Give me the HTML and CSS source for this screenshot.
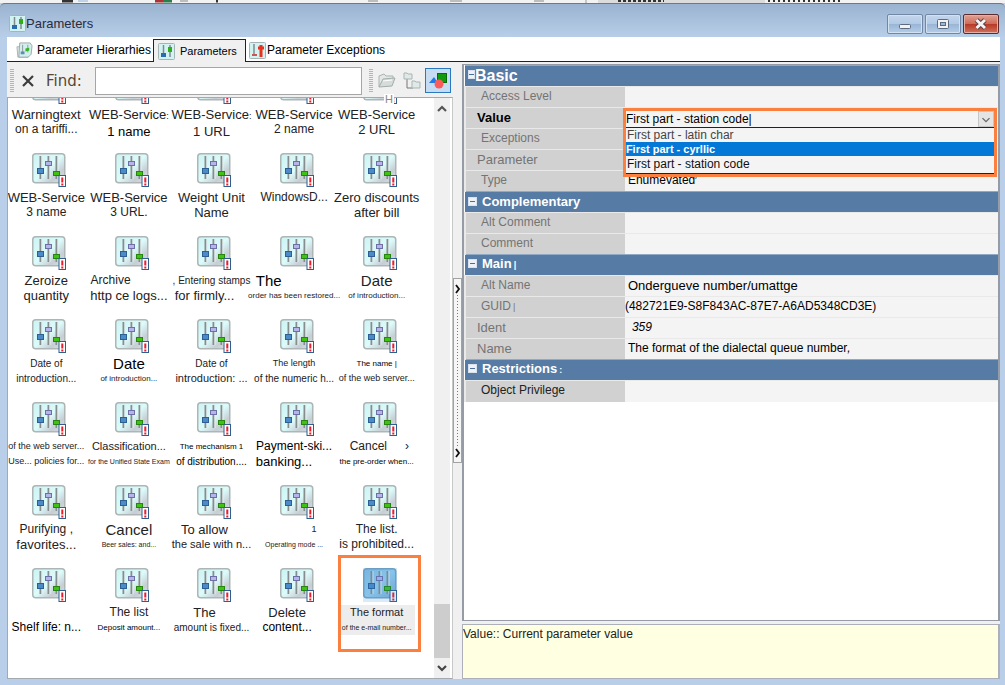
FILE: index.html
```html
<!DOCTYPE html>
<html lang="en">
<head>
<meta charset="utf-8">
<title>Parameters</title>
<link rel="stylesheet" href="styles.css">
</head>
<body>
<svg class="defs" aria-hidden="true">
  <defs>
    <linearGradient id="plate" x1="0" y1="0" x2="1" y2="1">
      <stop offset="0" stop-color="#cdf3f3"/><stop offset=".5" stop-color="#dcfbfb"/><stop offset=".75" stop-color="#c6ced4"/><stop offset="1" stop-color="#d8e2e4"/>
    </linearGradient>
    <linearGradient id="plate-on" x1="0" y1="0" x2="1" y2="1">
      <stop offset="0" stop-color="#86bfe4"/><stop offset=".5" stop-color="#9bd0ee"/><stop offset="1" stop-color="#7fadd2"/>
    </linearGradient>
    <g id="sliders">
      <path d="M8.500 3v23M16.500 3v23M24.500 3v23" stroke="#858d8d" stroke-width="2"/>
      <path d="M10 3v23M18 3v23M26 3v23" stroke="#e4eded" stroke-width="1"/>
      <rect x="5.500" y="15.500" width="6" height="5" fill="#4b8cc8" stroke="#2d5f94"/>
      <rect x="13.500" y="8.500" width="6" height="4" fill="#b5b5ec" stroke="#6f6fa8"/>
      <rect x="21.500" y="18.500" width="6" height="4" fill="#3fc214" stroke="#25850c"/>
      <rect x="27" y="22.500" width="6.500" height="11" fill="#fff" stroke="#2f5f8f"/>
      <path d="M30.300 24.500v5M30.300 30.500v2" stroke="#ec1c2c" stroke-width="2"/>
    </g>
    <symbol id="param" viewBox="0 0 34 34">
      <rect x=".75" y=".75" width="32" height="29" rx="3" fill="url(#plate)" stroke="#adb5b5" stroke-width="1.500"/>
      <use href="#sliders"/>
    </symbol>
    <symbol id="param-on" viewBox="0 0 34 34">
      <rect x=".75" y=".75" width="32" height="29" rx="3" fill="url(#plate-on)" stroke="#7ba2bd" stroke-width="1.500"/>
      <use href="#sliders"/>
      <rect width="34" height="34" fill="#2a8ad8" opacity=".18"/>
    </symbol>
    <symbol id="small" viewBox="0 0 17 17">
      <rect x=".5" y=".5" width="16" height="16" rx="1" fill="#d3f3f3" stroke="#a5b4b4"/>
      <path d="M5.500 2v12M12 2v12" stroke="#7f8c8c" stroke-width="1.500"/>
      <rect x="3" y="10" width="5" height="4" fill="#2b6cb0"/>
      <rect x="10" y="4" width="4" height="5" fill="#2fae1b"/>
    </symbol>
    <symbol id="small-red" viewBox="0 0 17 17">
      <rect x=".5" y=".5" width="16" height="16" rx="1" fill="#d3f3f3" stroke="#a5b4b4"/>
      <path d="M5 2v10" stroke="#7f8c8c" stroke-width="1.500"/>
      <path d="M3 13h5" stroke="#c55" stroke-width="2"/>
      <path d="M12 3v12M9 6h6" stroke="#e8321e" stroke-width="3"/>
    </symbol>
    <symbol id="small-folder" viewBox="0 0 18 18">
      <path d="M1 5h12v11H2z" fill="#dfe6e6" stroke="#a9b3b3"/>
      <path d="M4 1h11l2 3-1 9-3 3H3z" fill="#d3eeee" stroke="#9ba8a8"/>
      <path d="M7 3v8M12.500 3v8" stroke="#8b9797"/>
      <path d="M5 10h4v3H5z" fill="#5c8fae"/>
      <path d="M10 7l4-1v3l-4 1z" fill="#35b322"/>
    </symbol>
  </defs>
</svg>

<svg class="backdrop" viewBox="0 0 1005 3" preserveAspectRatio="none" aria-hidden="true">
  <rect width="1005" height="3" fill="#f2f2f2"/>
  <path d="M62 1h11M216 1h2" stroke="#333" stroke-width="3"/>
  <path d="M78 1h10" stroke="#bcd3ea" stroke-width="2"/>
  <path d="M155 1h8" stroke="#a33" stroke-width="3"/><path d="M163 1h9" stroke="#2d7c4c" stroke-width="3"/>
  <path d="M180 1h8M368 1h10M450 1h12M534 1h10" stroke="#888" stroke-width="1"/>
  <path d="M586 0v3" stroke="#999"/><path d="M598 1.500h167" stroke="#dcdcdc" stroke-width="3"/>
  <path d="M618 1h46" stroke="#333" stroke-width="2" stroke-dasharray="3 2"/>
  <path d="M768 1h74" stroke="#333" stroke-width="2" stroke-dasharray="2 3"/>
</svg>

<div class="window">
  <header class="titlebar">
    <svg class="icon17"><use href="#small"/></svg>
    <h1 class="title">Parameters</h1>
    <div class="controls">
      <button class="ctl" aria-label="Minimize"><svg viewBox="0 0 34 18"><rect x="11.500" y="9.500" width="11" height="4" rx="1" fill="#f2f2f2" stroke="#5c6b80"/></svg></button>
      <button class="ctl" aria-label="Restore"><svg viewBox="0 0 34 18"><rect x="11.500" y="4.500" width="11" height="9" rx="1" fill="#f2f2f2" stroke="#5c6b80"/><rect x="14.500" y="7.500" width="5" height="3" fill="#9db8d8" stroke="#5c6b80"/></svg></button>
      <button class="ctl close" aria-label="Close"><svg viewBox="0 0 34 18"><path d="M12.500 5l8.500 8M21 5l-8.500 8" stroke="#5b4048" stroke-width="5"/><path d="M12.500 5l8.500 8M21 5l-8.500 8" stroke="#f4f4f4" stroke-width="3"/></svg></button>
    </div>
  </header>

  <nav class="tabs" role="tablist">
    <button class="tab first" role="tab"><svg class="icon17"><use href="#small-folder"/></svg>Parameter Hierarhies</button>
    <button class="tab active" role="tab" aria-selected="true"><svg class="icon17"><use href="#small"/></svg>Parameters</button>
    <button class="tab last" role="tab"><svg class="icon17"><use href="#small-red"/></svg>Parameter Exceptions</button>
  </nav>

  <main class="main">
    <section class="left">
      <div class="toolbar">
        <span class="grip"></span>
        <button class="tool clear" aria-label="Clear"><svg viewBox="0 0 12 12"><path d="M1 1l10 10M11 1L1 11" stroke="#3c3c3c" stroke-width="2.200"/></svg></button>
        <label class="find" for="find">Find:</label>
        <input class="search" id="find" type="text">
        <span class="grip"></span>
        <button class="tool folder" aria-label="Open folder"><svg viewBox="0 0 18 16"><path d="M1 14V3l5-2 2 2h7v3" fill="#e3e8e6" stroke="#aab3b0"/><path d="M1 14l4-8 12-1-3 8z" fill="#d5dcda" stroke="#a3adaa"/><path d="M5 8l9-1" stroke="#fff"/></svg></button>
        <button class="tool tree" aria-label="Tree"><svg viewBox="0 0 18 18"><path d="M4 6v10h6" fill="none" stroke="#777"/><path d="M1 1h3l1 1h4v5H1z" fill="#dfe9e8" stroke="#a9b5b3"/><path d="M9 9h3l1 1h4v6H9z" fill="#dfe9e8" stroke="#a9b5b3"/></svg></button>
        <button class="tool shapes" aria-label="Shapes" aria-pressed="true"><svg viewBox="0 0 18 16"><path d="M0 10l5-6 4 6z" fill="#1b7bea"/><rect x="8.500" y=".5" width="9" height="9" fill="#0f9a0f" stroke="#0a6a0a"/><circle cx="10" cy="11" r="4.500" fill="#fb5a5a"/></svg></button>
      </div>

      <div class="list">
        <span class="hotkey">H</span>
        <div class="viewport">
          <ul class="tiles">
            <li class="tile"><svg><use href="#param"/></svg><span class="s13">Warningtext</span><span class="s12">on a tariffi...</span></li>
            <li class="tile"><svg><use href="#param"/></svg><span class="s13">WEB-Service<small>:</small></span><span class="s13 dark">1 name</span></li>
            <li class="tile"><svg><use href="#param"/></svg><span class="s13">WEB-Service<small>:</small></span><span class="s13">1 URL</span></li>
            <li class="tile"><svg><use href="#param"/></svg><span class="s13">WEB-Service</span><span class="s12">2 name</span></li>
            <li class="tile"><svg><use href="#param"/></svg><span class="s13">WEB-Service</span><span class="s13">2 URL</span></li>

            <li class="tile"><svg><use href="#param"/></svg><span class="s13">WEB-Service</span><span class="s12">3 name</span></li>
            <li class="tile"><svg><use href="#param"/></svg><span class="s13">WEB-Service</span><span class="s12">3 URL.</span></li>
            <li class="tile"><svg><use href="#param"/></svg><span class="s13">Weight Unit</span><span class="s13">Name</span></li>
            <li class="tile"><svg><use href="#param"/></svg><span class="s12">WindowsD...</span></li>
            <li class="tile"><svg><use href="#param"/></svg><span class="s13">Zero discounts</span><span class="s13">after bill</span></li>

            <li class="tile"><svg><use href="#param"/></svg><span class="s13">Zeroize</span><span class="s13">quantity</span></li>
            <li class="tile"><svg><use href="#param"/></svg><span class="s12 start">Archive</span><span class="s13">http ce logs...</span></li>
            <li class="tile"><svg><use href="#param"/></svg><span class="s10">, Entering stamps</span><span class="s13 pull">for firmly...</span></li>
            <li class="tile"><svg><use href="#param"/></svg><span class="s15 start dark">The</span><span class="s8">order has been restored...</span></li>
            <li class="tile"><svg><use href="#param"/></svg><span class="s15">Date</span><span class="s8">of introduction...</span></li>

            <li class="tile"><svg><use href="#param"/></svg><span class="s10">Date of</span><span class="s10">introduction...</span></li>
            <li class="tile"><svg><use href="#param"/></svg><span class="s15 dark">Date</span><span class="s8">of introduction...</span></li>
            <li class="tile"><svg><use href="#param"/></svg><span class="s10">Date of</span><span class="s11">introduction: ...</span></li>
            <li class="tile"><svg><use href="#param"/></svg><span class="s9">The length</span><span class="s10">of the numeric h...</span></li>
            <li class="tile"><svg><use href="#param"/></svg><span class="s8 dark">The name |</span><span class="s9">of the web server...</span></li>

            <li class="tile"><svg><use href="#param"/></svg><span class="s9">of the web server...</span><span class="s9">Use... policies for...</span></li>
            <li class="tile"><svg><use href="#param"/></svg><span class="s11">Classification...</span><span class="s7">for the Unified State Exam</span></li>
            <li class="tile"><svg><use href="#param"/></svg><span class="s8 dark">The mechanism 1</span><span class="s10 dark">of distribution....</span></li>
            <li class="tile"><svg><use href="#param"/></svg><span class="s12 dark">Payment-ski...</span><span class="s13 start dark">banking...</span></li>
            <li class="tile"><svg><use href="#param"/></svg><span class="s12 spread"><span>Cancel</span><span>›</span></span><span class="s8 dark">the pre-order when...</span></li>

            <li class="tile"><svg><use href="#param"/></svg><span class="s12">Purifying ,</span><span class="s13">favorites...</span></li>
            <li class="tile"><svg><use href="#param"/></svg><span class="s15">Cancel</span><span class="s7">Beer sales: and...</span></li>
            <li class="tile"><svg><use href="#param"/></svg><span class="s13 pull">To allow</span><span class="s11">the sale with n...</span></li>
            <li class="tile"><svg><use href="#param"/></svg><span class="s9 one">1</span><span class="s7">Operating mode ...</span></li>
            <li class="tile"><svg><use href="#param"/></svg><span class="s12">The list.</span><span class="s12">is prohibited...</span></li>

            <li class="tile"><svg><use href="#param"/></svg><span></span><span class="s12 dark">Shelf life: n...</span></li>
            <li class="tile"><svg><use href="#param"/></svg><span class="s12">The list</span><span class="s8 dark">Deposit amount...</span></li>
            <li class="tile"><svg><use href="#param"/></svg><span class="s13 pull">The</span><span class="s10">amount is fixed...</span></li>
            <li class="tile"><svg><use href="#param"/></svg><span class="s13 pull">Delete</span><span class="s12 dark pull">content...</span></li>
            <li class="tile selected"><svg><use href="#param-on"/></svg><span class="s11">The format</span><span class="s7">of the e-mail number...</span></li>
          </ul>
        </div>
        <div class="scrollbar">
          <svg viewBox="0 0 16 20"><path d="M4 13l4-4 4 4" fill="none" stroke="#555" stroke-width="2.200"/></svg>
          <span class="track"><span class="thumb"></span></span>
          <svg viewBox="0 0 16 20"><path d="M4 8l4 4 4-4" fill="none" stroke="#444" stroke-width="2.200"/></svg>
        </div>
      </div>
    </section>

    <div class="splitter">
      <button class="handle" aria-label="Collapse panel">
        <svg viewBox="0 0 7 12"><path d="M2 2l3 4-3 4" fill="none" stroke="#111" stroke-width="1.800"/></svg>
        <span class="dots"></span>
        <svg viewBox="0 0 7 12"><path d="M2 2l3 4-3 4" fill="none" stroke="#111" stroke-width="1.800"/></svg>
      </button>
    </div>

    <section class="right">
      <div class="props">
        <table class="grid">
          <colgroup><col class="names"><col></colgroup>
          <tbody>
            <tr class="group big"><th colspan="2"><span class="minus"></span>Basic</th></tr>
            <tr><th>Access Level</th><td></td></tr>
            <tr><th class="current out">Value</th>
              <td class="editing">
                <div class="combo">
                  <div class="field">
                    <input class="value" type="text" aria-label="Value" value="First part - station code|">
                    <button class="arrow" aria-label="Open list"><svg viewBox="0 0 16 16"><path d="M4 7l4 4 4-4" fill="none" stroke="#666" stroke-width="1.500"/></svg></button>
                  </div>
                  <ul class="options" role="listbox">
                    <li role="option">First part - latin char</li>
                    <li role="option" class="chosen" aria-selected="true">First part - cyrllic</li>
                    <li role="option" class="dark">First part - station code</li>
                  </ul>
                </div>
              </td></tr>
            <tr><th>Exceptions</th><td></td></tr>
            <tr><th class="out s13">Parameter</th><td></td></tr>
            <tr><th>Type</th><td>Enumevated<sup>/</sup></td></tr>
            <tr class="group"><th colspan="2"><span class="minus"></span>Complementary</th></tr>
            <tr><th>Alt Comment</th><td></td></tr>
            <tr><th>Comment</th><td></td></tr>
            <tr class="group"><th colspan="2"><span class="minus"></span>Main<small>|</small></th></tr>
            <tr><th>Alt Name</th><td class="s13">Ondergueve number/umattge</td></tr>
            <tr><th>GUID<small>|</small></th><td class="guid">(482721E9-S8F843AC-87E7-A6AD5348CD3E)</td></tr>
            <tr><th class="out s13">Ident</th><td class="it ident">359</td></tr>
            <tr><th class="out s13">Name</th><td>The format of the dialectal queue number<i>,</i></td></tr>
            <tr class="group"><th colspan="2"><span class="minus"></span>Restrictions<small>:</small></th></tr>
            <tr><th class="dark">Object Privilege</th><td></td></tr>
          </tbody>
        </table>
      </div>
      <p class="hint">Value:: Current parameter value</p>
    </section>
  </main>
</div>
</body>
</html>
```
FILE: styles.css
```css
* { box-sizing: border-box; }

body {
  margin: 0;
  height: 100vh;
  display: flex;
  flex-direction: column;
  overflow: hidden;
  font: 12px/15px "Liberation Sans", Arial, sans-serif;
  color: #222;
  background: #b9cfe9;
}

button, input { font: inherit; color: inherit; }
ul { list-style: none; margin: 0; padding: 0; }
svg { display: block; }
.defs { position: absolute; width: 0; height: 0; }
.backdrop { width: 100%; height: 3px; flex: none; }

.s7 { font-size: 7px; }
.s8 { font-size: 8px; }
.s9 { font-size: 9px; }
.s10 { font-size: 10px; }
.s11 { font-size: 11px; }
.s12 { font-size: 12px; }
.s13 { font-size: 13px; }
.s15 { font-size: 15px; }
.it { font-style: italic; }

/* window frame */
.window {
  flex: 1;
  min-height: 0;
  display: flex;
  flex-direction: column;
  border-top: 1px solid #707880;
  border-radius: 5px 5px 0 0;
  padding: 0 5px 6px 7px;
  background: linear-gradient(#9ab3d0, #b9cfe9 34px);
}
.titlebar {
  display: flex;
  align-items: center;
  height: 33px;
  flex: none;
  padding: 6px 1px 0 2px;
}
.icon17 { width: 17px; height: 17px; flex: none; }
.title {
  margin: 0;
  flex: 1;
  font-size: 13px;
  font-weight: 400;
  color: #2b2b3c;
}
.controls { display: flex; gap: 2px; }
.ctl {
  width: 36px;
  height: 20px;
  padding: 0;
  border: 1px solid #7187a3;
  border-radius: 2px;
  background: linear-gradient(#c3d6ec, #b3cae5 48%, #9ab6d6 52%, #b4cde8);
  box-shadow: inset 0 0 0 1px #d3e2f3;
}
.ctl svg { width: 34px; height: 18px; }
.close {
  border-color: #5f2a2e;
  background: linear-gradient(#e0a294, #cf6c5a 48%, #b93a26 52%, #d1725d);
  box-shadow: inset 0 0 0 1px #e2b0a6;
}

.tabs {
  display: flex;
  align-items: flex-end;
  height: 25px;
  flex: none;
  background: linear-gradient(#222, #222) bottom / 100% 1px no-repeat #fff;
}
.tab {
  display: flex;
  align-items: center;
  gap: 4px;
  height: 23px;
  padding: 0;
  border: 0;
  background: none;
  color: #000;
  white-space: nowrap;
}
.first { width: 146px; padding-left: 9px; }
.active {
  width: 93px;
  padding-left: 4px;
  gap: 5px;
  border: 1px solid #222;
  border-bottom: 0;
  background: #f0f0f0;
  font-size: 11px;
}
.last { padding-left: 3px; gap: 1px; }

.main {
  flex: 1;
  min-height: 0;
  display: grid;
  grid-template-columns: minmax(0, 446fr) 9px minmax(0, 538fr);
  background: #f0f0f0;
}

/* parameter list */
.left { display: flex; flex-direction: column; min-height: 0; }
.toolbar {
  display: flex;
  align-items: center;
  height: 35px;
  flex: none;
  padding: 2px 2px 0 3px;
}
.grip {
  width: 4px;
  height: 24px;
  background: repeating-linear-gradient(#b5b5b5 0 1px, #f0f0f0 1px 2px);
}
.tool {
  display: grid;
  place-items: center;
  padding: 0;
  border: 0;
  background: none;
}
.clear { margin: 0 12px 0 8px; }
.clear svg { width: 12px; height: 12px; }
.find {
  font: 15px/18px "DejaVu Sans", sans-serif;
  color: #574634;
  width: 49px;
}
.search {
  flex: 1;
  min-width: 0;
  height: 28px;
  padding: 0 4px;
  border: 1px solid #a6a6a6;
  background: #fff;
  margin-right: 7px;
}
.folder { margin-left: 5px; }
.folder svg { width: 18px; height: 16px; }
.tree { margin: 0 4px 0 7px; }
.tree svg { width: 18px; height: 18px; }
.shapes {
  width: 26px;
  height: 25px;
  border: 1px solid #2a78c0;
  background: #c5dcf2;
}
.shapes svg { width: 18px; height: 16px; }

.list {
  position: relative;
  flex: 1;
  min-height: 0;
  display: flex;
  border: 1px solid #a4a9b0;
  border-right-color: #c8c8c8;
  background: #fff;
  padding-right: 2px;
}
.hotkey {
  position: absolute;
  left: 376px;
  top: -4px;
  z-index: 1;
  padding: 0 1px;
  font-size: 11px;
  line-height: 11px;
  color: #888;
  background: #fff;
}
.viewport { flex: 1; min-width: 0; overflow: hidden; }
.tiles {
  display: grid;
  grid-template-columns: repeat(5, minmax(0, 1fr));
  grid-auto-rows: 83px;
  margin-top: -28px;
  padding: 0 13px 0 0;
}
.tile {
  position: relative;
  display: flex;
  flex-direction: column;
  align-items: center;
  white-space: nowrap;
}
.tile svg { width: 34px; height: 34px; margin-bottom: 3px; flex: none; }
.tile > span { line-height: 15px; min-height: 15px; margin-right: 6px; }
.tile small { font-size: 9px; }
.tile .start { align-self: flex-start; }
.tile .pull { margin-right: 20px; }
.tile .spread { display: flex; gap: 18px; align-self: flex-end; padding-right: 6px; }
.tile .one { align-self: flex-end; padding-right: 16px; }
.dark { color: #000; }
.selected > span {
  width: 76px;
  text-align: center;
  background: #ededed;
}
.selected::after {
  content: "";
  position: absolute;
  inset: -13px 0 -1px;
  border: 3px solid #fb8040;
}

.scrollbar {
  width: 16px;
  display: flex;
  flex-direction: column;
  background: #f0f0f0;
}
.scrollbar svg { width: 16px; height: 20px; flex: none; }
.track {
  flex: 1;
  display: flex;
  flex-direction: column;
  justify-content: flex-end;
}
.thumb { height: 10%; background: #cdcdcd; }

.splitter { display: flex; align-items: center; }
.handle {
  width: 9px;
  height: 30%;
  display: flex;
  flex-direction: column;
  align-items: center;
  padding: 4px 0 3px;
  border: 1px solid #a2a2a2;
  background: #f6f6f6;
}
.handle svg { width: 7px; height: 12px; flex: none; }
.dots {
  flex: 1;
  width: 1px;
  background: repeating-linear-gradient(#3b87c8 0 1px, transparent 1px 3px);
}

/* property grid */
.right {
  display: flex;
  flex-direction: column;
  gap: 3px;
  min-height: 0;
  padding-top: 2px;
}
.props {
  flex: 1;
  min-height: 0;
  border: 1px solid #969ca6;
  border-left-width: 2px;
  border-right-width: 2px;
  background: #fff;
}
.grid {
  width: 100%;
  table-layout: fixed;
  border-collapse: collapse;
}
.names { width: 30%; }
.grid th, .grid td {
  height: 21px;
  padding: 0 0 1px 3px;
  text-align: left;
  white-space: nowrap;
  border-top: 1px solid #e9e9e9;
  line-height: 15px;
}
.grid th {
  padding-left: 15px;
  font-weight: 400;
  color: #747474;
  background: #d1d1d1;
  border-left: 2px solid #e9e9e9;
}
.grid td { color: #000; background: #f4f4f4; }
.grid .out { padding-left: 11px; }
.grid .current { font-weight: 700; color: #000; font-size: 13px; }
.grid .dark { color: #222; }
.grid .guid { padding-left: 0; }
.grid .ident { padding-left: 7px; }
.grid sup { font-size: 8px; line-height: 0; }
.grid small { font-size: 9px; margin-left: 2px; }
.grid .group th {
  padding-left: 3px;
  border-left: 0;
  font-size: 13px;
  font-weight: 700;
  color: #fff;
  background: #567ba5;
  border-top-color: #8fa9c6;
}
.grid .big th { font-size: 16px; }
.minus {
  display: inline-block;
  width: 9px;
  height: 9px;
  margin-right: 5px;
  border: 1px solid #d9e2ec;
  background: linear-gradient(#4a6d99, #4a6d99) center / 5px 1px no-repeat #eef2f7;
}
.big .minus { width: 7px; margin-right: 0; vertical-align: 2px; }

.grid .editing { position: relative; }
.combo {
  position: absolute;
  z-index: 2;
  top: 0;
  left: -2px;
  right: 1px;
  display: flex;
  flex-direction: column;
  border: 3px solid #fb8040;
  background: #f4f4f4;
}
.field { display: flex; height: 17px; border-bottom: 1px solid #222; }
.value {
  flex: 1;
  min-width: 0;
  padding: 0;
  border: 0;
  background: none;
  line-height: 15px;
}
.arrow {
  width: 16px;
  padding: 0;
  border: 1px solid #c6c6c6;
  background: #e4e4e4;
}
.arrow svg { width: 14px; height: 14px; }
.options { border-bottom: 1px solid #222; line-height: 14px; }
.options li { padding-left: 1px; color: #444; }
.options .chosen {
  padding-left: 0;
  font-size: 11px;
  font-weight: 700;
  color: #fff;
  background: #0478d7;
}
.options .dark { line-height: 17px; color: #111; }

.hint {
  margin: 0;
  height: 55px;
  flex: none;
  padding: 2px 0;
  border: 1px solid #adb0b8;
  border-right-width: 2px;
  background: #ffffe1;
}
```
